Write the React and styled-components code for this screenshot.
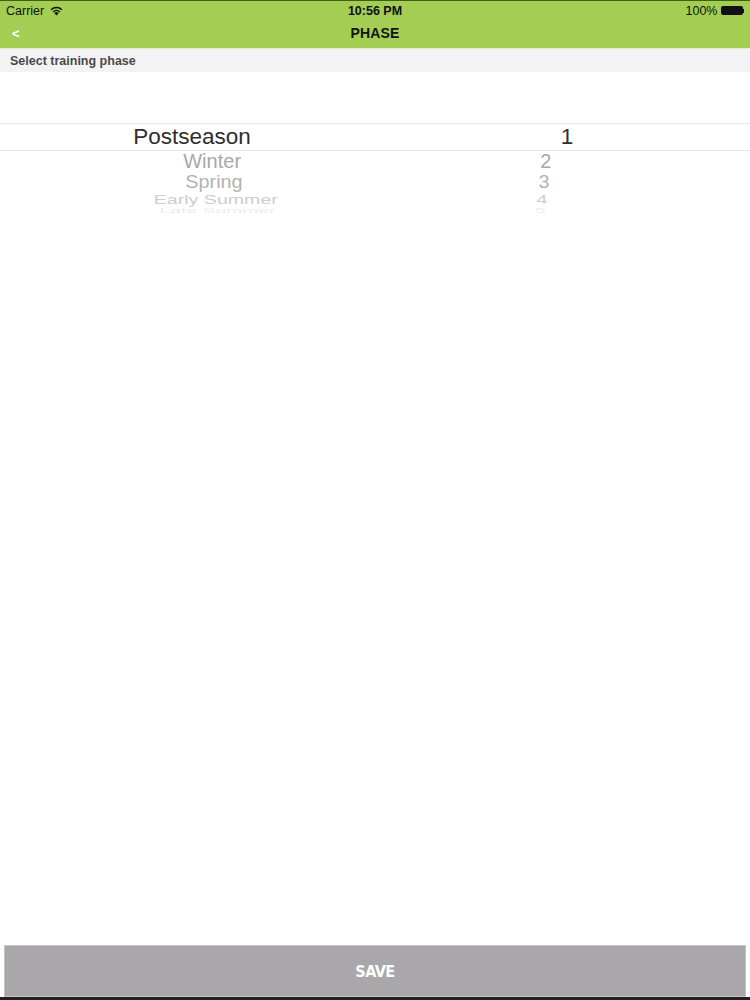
import React from 'react';
import styled, { createGlobalStyle } from 'styled-components';

const GlobalStyle = createGlobalStyle`
  html, body {
    margin: 0;
    padding: 0;
    background: #ffffff;
  }
  body {
    font-family: 'Liberation Sans', Arial, sans-serif;
  }
`;

const phases = [
  { name: 'Postseason', num: '1', height: 26, sx: 1, sy: 1, color: '#2e2e30' },
  { name: 'Winter', num: '2', height: 21, sx: 0.89, sy: 0.86, color: '#a8a8a8' },
  { name: 'Spring', num: '3', height: 19, sx: 0.88, sy: 0.78, color: '#b2b2b2' },
  { name: 'Early Summer', num: '4', height: 14, sx: 0.87, sy: 0.56, color: '#cdcdcd' },
  { name: 'Late Summer', num: '5', height: 8, sx: 0.86, sy: 0.3, color: '#ececec' },
];

const App = () => {
  return (
    <Page>
      <GlobalStyle />
      <Header>
        <StatusBar>
          <StatusLeft>
            <span>Carrier</span>
            <svg width="15" height="11" viewBox="0 0 15 11">
              <path d="M7.5 10.5 L5.3 8 A3.2 3.2 0 0 1 9.7 8 Z" fill="#111" />
              <path d="M3.7 6.3 A5.5 5.5 0 0 1 11.3 6.3 L10.3 7.4 A4 4 0 0 0 4.7 7.4 Z" fill="#111" />
              <path d="M1.6 4.2 A8.5 8.5 0 0 1 13.4 4.2 L12.4 5.3 A7 7 0 0 0 2.6 5.3 Z" fill="#111" />
            </svg>
          </StatusLeft>
          <StatusTime>10:56 PM</StatusTime>
          <StatusRight>
            <span>100%</span>
            <Battery>
              <BatteryFill />
              <BatteryTip />
            </Battery>
          </StatusRight>
        </StatusBar>
        <NavBar>
          <BackButton>&lt;</BackButton>
          <NavTitle>PHASE</NavTitle>
          <NavSpacer />
        </NavBar>
      </Header>
      <SectionHeader>Select training phase</SectionHeader>
      <Picker>
        <PickerTop />
        {phases.map((p, i) => (
          <PickerRow
            key={p.name}
            $height={p.height}
            $sx={p.sx}
            $sy={p.sy}
            $color={p.color}
            $selected={i === 0}
          >
            <NameCell>{p.name}</NameCell>
            <NumCell>{p.num}</NumCell>
          </PickerRow>
        ))}
      </Picker>
      <Filler />
      <SaveButton>SAVE</SaveButton>
      <BottomEdge />
    </Page>
  );
};

export default App;

const Page = styled.div`
  display: flex;
  flex-direction: column;
  width: 750px;
  height: 1000px;
  overflow: hidden;
`;

const Header = styled.div`
  display: flex;
  flex-direction: column;
  background: #a3cd53;
  border-top: 1px solid #3f5f16;
  border-bottom: 1px solid #dfeec4;
`;

const StatusBar = styled.div`
  display: grid;
  grid-template-columns: 1fr auto 1fr;
  align-items: center;
  height: 19px;
  padding: 0 6px;
  font-size: 12.5px;
  color: #111;
`;

const StatusLeft = styled.div`
  display: flex;
  align-items: center;
  gap: 5px;
`;

const StatusTime = styled.div`
  font-weight: 700;
  font-size: 12.5px;
`;

const StatusRight = styled.div`
  display: flex;
  justify-content: flex-end;
  align-items: center;
  gap: 3px;
`;

const Battery = styled.div`
  display: flex;
  align-items: center;
`;

const BatteryFill = styled.div`
  width: 22px;
  height: 9px;
  border-radius: 2px;
  background: #111;
`;

const BatteryTip = styled.div`
  width: 1.5px;
  height: 4px;
  background: #111;
`;

const NavBar = styled.div`
  display: flex;
  align-items: center;
  justify-content: space-between;
  height: 28px;
  padding: 0 12px 2px;
  box-sizing: border-box;
`;

const BackButton = styled.div`
  width: 40px;
  font-size: 13px;
  font-weight: 700;
  color: #ffffff;
`;

const NavTitle = styled.div`
  font-size: 14px;
  font-weight: 700;
  color: #141414;
  letter-spacing: 0.2px;
`;

const NavSpacer = styled.div`
  width: 40px;
`;

const SectionHeader = styled.div`
  display: flex;
  align-items: center;
  height: 23px;
  padding: 0 10px;
  background: #f3f2f4;
  font-size: 12.5px;
  font-weight: 700;
  color: #4a4a4c;
`;

const Picker = styled.div`
  display: flex;
  flex-direction: column;
`;

const PickerTop = styled.div`
  height: 51px;
  border-bottom: 1px solid #e8e8e8;
`;

const PickerRow = styled.div`
  display: grid;
  grid-template-columns: 384px 366px;
  align-items: center;
  height: ${p => p.$height}px;
  color: ${p => p.$color};
  font-size: 22.5px;
  line-height: 1;
  transform: scale(${p => p.$sx}, ${p => p.$sy});
  transform-origin: 375px 50%;
  border-bottom: ${p => (p.$selected ? '1px solid #e8e8e8' : 'none')};
`;

const NameCell = styled.div`
  text-align: center;
  white-space: nowrap;
`;

const NumCell = styled.div`
  text-align: center;
`;

const Filler = styled.div`
  flex: 1;
`;

const SaveButton = styled.div`
  display: flex;
  align-items: center;
  justify-content: center;
  height: 50px;
  margin: 0 4px;
  background: #a9a7aa;
  border: 1px solid #c4c3c5;
  color: #ffffff;
  font-family: 'DejaVu Sans Condensed', 'Liberation Sans', sans-serif;
  font-size: 16px;
  font-weight: 700;
  letter-spacing: -0.5px;
`;

const BottomEdge = styled.div`
  height: 3px;
  background: #222222;
`;
